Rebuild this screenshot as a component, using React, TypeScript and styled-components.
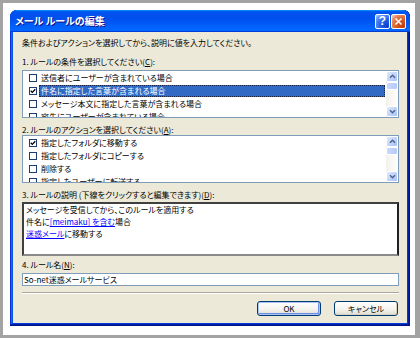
import React from "react";
import styled, { createGlobalStyle } from "styled-components";

const GlobalStyle = createGlobalStyle`
  html, body {
    margin: 0;
    padding: 0;
    background: #ffffff;
  }
  body {
    font-family: "Noto Sans CJK JP", "Noto Sans", sans-serif;
    font-feature-settings: "palt";
    color: #000000;
  }
`;

const Frame = styled.div`
  background: #ffffff;
  border: 3px solid #a3a3a3;
  border-right-width: 5px;
  box-sizing: border-box;
  height: 338px;
  padding: 7px 5px 9px 7px;
  width: 420px;
`;

const Window = styled.div`
  background: #0855dd;
  border-radius: 7px 7px 0 0;
  box-shadow: inset -1px -1px #00138c, inset 1px 1px #0831d9,
    inset -2px -2px #001ea0, inset 2px 2px #166aee, inset -3px -3px #003bda,
    inset 3px 3px #0855dd;
  box-sizing: border-box;
  display: flex;
  flex-direction: column;
  height: 316px;
  overflow: hidden;
  padding-bottom: 3px;
  width: 400px;
`;

const TitleBar = styled.div`
  align-items: center;
  background: linear-gradient(
    180deg,
    #0997ff,
    #0053ee 8%,
    #0050ee 40%,
    #0066ff 88%,
    #0066ff 93%,
    #005bff 95%,
    #003dd7 96%,
    #003dd7
  );
  border-radius: 7px 7px 0 0;
  display: flex;
  flex-shrink: 0;
  gap: 1px;
  height: 22px;
  padding: 0 4px 0 5px;
`;

const TitleText = styled.div`
  color: #ffffff;
  flex: 1;
  font-size: 10px;
  font-weight: 700;
  line-height: 12px;
  text-shadow: 1px 1px #0f1089;
`;

const CaptionButton = styled.div<{ $close?: boolean }>`
  align-items: center;
  background: ${({ $close }) =>
    $close
      ? "radial-gradient(circle at 85% 85%, #c23a0c 0%, #dc6527 50%, #e58a64 75%, #f8d2c0 100%)"
      : "radial-gradient(circle at 85% 85%, #0a3fcf 0%, #2d68e8 50%, #5a8ef5 75%, #b6cdfb 100%)"};
  border: 1px solid #ffffff;
  border-radius: 2px;
  box-sizing: border-box;
  color: #ffffff;
  display: flex;
  font-family: "Liberation Sans", sans-serif;
  font-size: 12px;
  font-weight: 700;
  height: 15px;
  justify-content: center;
  width: 15px;
`;

const Client = styled.div`
  background: #ece9d8;
  display: flex;
  flex: 1;
  flex-direction: column;
  font-size: 8px;
  margin: 0 3px;
  padding: 6px 8px 0 9px;
`;

const TextLine = styled.div<{ $mt?: number }>`
  height: 10px;
  line-height: 10px;
  margin-top: ${({ $mt }) => $mt ?? 0}px;
  white-space: nowrap;
`;

const ListBox = styled.div<{ $mt?: number }>`
  background: #ffffff;
  border: 1px solid #7f9db9;
  display: flex;
  flex-shrink: 0;
  height: 46px;
  margin-top: ${({ $mt }) => $mt ?? 0}px;
  overflow: hidden;
`;

const Rows = styled.div`
  display: flex;
  flex: 1;
  flex-direction: column;
  overflow: hidden;
  padding-right: 1px;
`;

const Row = styled.div`
  align-items: center;
  display: flex;
  flex-shrink: 0;
  height: 13px;
  padding-left: 6px;
`;

const CheckBox = styled.div`
  align-items: center;
  background: #ffffff;
  border: 1px solid #1c3d6e;
  box-sizing: border-box;
  display: flex;
  flex-shrink: 0;
  height: 8px;
  justify-content: center;
  width: 8px;
`;

const RowLabel = styled.div<{ $selected?: boolean }>`
  background: ${({ $selected }) => ($selected ? "#316ac5" : "transparent")};
  box-sizing: border-box;
  color: ${({ $selected }) => ($selected ? "#ffffff" : "#000000")};
  flex: 1;
  height: 12px;
  line-height: 11px;
  margin-left: 2px;
  outline: ${({ $selected }) =>
    $selected ? "1px dotted rgba(20, 20, 40, 0.8)" : "none"};
  outline-offset: -1px;
  padding: 0 2px;
  white-space: nowrap;
`;

const ScrollBar = styled.div`
  background: linear-gradient(90deg, #f3f1ec, #fefefb);
  display: flex;
  flex-direction: column;
  flex-shrink: 0;
  width: 12px;
`;

const ScrollArrow = styled.div`
  align-items: center;
  background: linear-gradient(135deg, #e0e9fe, #bcd0fb 60%, #a8c1f6);
  border: 1px solid #ffffff;
  border-radius: 2px;
  box-sizing: border-box;
  display: flex;
  height: 11px;
  justify-content: center;
`;

const ScrollThumb = styled.div`
  background: linear-gradient(90deg, #c8d8fc, #b7cbf9);
  border: 1px solid #ffffff;
  border-radius: 2px;
  box-sizing: border-box;
  height: 8px;
`;

const ScrollTrack = styled.div`
  flex: 1;
`;

const Description = styled.div`
  background: #ffffff;
  border-color: #404040 #202020 #8a8a8a #404040;
  border-style: solid;
  border-width: 2px;
  box-sizing: border-box;
  height: 54px;
  line-height: 12px;
  margin-top: 2px;
  padding: 0 2px;
`;

const Link = styled.span`
  color: #0000ff;
  text-decoration: underline;
`;

const NameInput = styled.div`
  background: #ffffff;
  border: 1px solid #7f9db9;
  box-sizing: border-box;
  height: 13px;
  line-height: 11px;
  margin-top: 3px;
  padding: 0 1px;
`;

const Separator = styled.div`
  border-bottom: 1px solid #ffffff;
  border-top: 1px solid #aca899;
  margin-top: 6px;
`;

const ButtonRow = styled.div`
  display: flex;
  gap: 13px;
  justify-content: flex-end;
  margin-top: 7px;
  padding-right: 1px;
`;

const Button = styled.div<{ $default?: boolean }>`
  align-items: center;
  background: linear-gradient(180deg, #ffffff, #f3f2ec 60%, #e3e0d4 90%, #d6d0c5);
  border: 1px solid #003c74;
  border-radius: 3px;
  box-shadow: ${({ $default }) =>
    $default
      ? "inset 0 0 0 1px #a9c4f5, inset -1px -1px 0 1px #6d8ee8"
      : "inset -1px -1px 0 #d8d2bd"};
  box-sizing: border-box;
  display: flex;
  height: 15px;
  justify-content: center;
  width: 64px;
`;

const Key = styled.span`
  text-decoration: underline;
`;

function Check() {
  return (
    <svg width="6" height="6" viewBox="0 0 6 6">
      <path d="M0.7 2.8 L2.3 4.4 L5.3 1.2" fill="none" stroke="#000" strokeWidth="1.3" />
    </svg>
  );
}

function Chevron({ down }: { down?: boolean }) {
  return (
    <svg width="7" height="5" viewBox="0 0 7 5">
      <path
        d={down ? "M1 1.2 L3.5 3.7 L6 1.2" : "M1 3.8 L3.5 1.3 L6 3.8"}
        fill="none"
        stroke="#4d6185"
        strokeWidth="1.4"
      />
    </svg>
  );
}

type Item = { text: string; checked?: boolean; selected?: boolean };

function RuleList({ items, mt }: { items: Item[]; mt: number }) {
  return (
    <ListBox $mt={mt}>
      <Rows>
        {items.map((item) => (
          <Row key={item.text}>
            <CheckBox>{item.checked && <Check />}</CheckBox>
            <RowLabel $selected={item.selected}>{item.text}</RowLabel>
          </Row>
        ))}
      </Rows>
      <ScrollBar>
        <ScrollArrow>
          <Chevron />
        </ScrollArrow>
        <ScrollThumb />
        <ScrollTrack />
        <ScrollArrow>
          <Chevron down />
        </ScrollArrow>
      </ScrollBar>
    </ListBox>
  );
}

const conditions: Item[] = [
  { text: "送信者にユーザーが含まれている場合" },
  { text: "件名に指定した言葉が含まれる場合", checked: true, selected: true },
  { text: "メッセージ本文に指定した言葉が含まれる場合" },
  { text: "宛先にユーザーが含まれている場合" },
];

const actions: Item[] = [
  { text: "指定したフォルダに移動する", checked: true },
  { text: "指定したフォルダにコピーする" },
  { text: "削除する" },
  { text: "指定したユーザーに転送する" },
];

export default function App() {
  return (
    <Frame>
      <GlobalStyle />
      <Window>
        <TitleBar>
          <TitleText>メール ルールの編集</TitleText>
          <CaptionButton>?</CaptionButton>
          <CaptionButton $close>
            <svg width="9" height="9" viewBox="0 0 9 9">
              <path d="M1.5 1.5 L7.5 7.5 M7.5 1.5 L1.5 7.5" stroke="#fff" strokeWidth="1.6" />
            </svg>
          </CaptionButton>
        </TitleBar>
        <Client>
          <TextLine>条件およびアクションを選択してから、説明に値を入力してください。</TextLine>
          <TextLine $mt={9}>
            1. ルールの条件を選択してください(<Key>C</Key>):
          </TextLine>
          <RuleList items={conditions} mt={3} />
          <TextLine $mt={7}>
            2. ルールのアクションを選択してください(<Key>A</Key>):
          </TextLine>
          <RuleList items={actions} mt={0} />
          <TextLine $mt={7}>
            3. ルールの説明 (下線をクリックすると編集できます)(<Key>D</Key>):
          </TextLine>
          <Description>
            <div>メッセージを受信してから、このルールを適用する</div>
            <div>
              件名に<Link>[meimaku] を含む</Link>場合
            </div>
            <div>
              <Link>迷惑メール</Link>に移動する
            </div>
          </Description>
          <TextLine $mt={4}>
            4. ルール名(<Key>N</Key>):
          </TextLine>
          <NameInput>So-net迷惑メールサービス</NameInput>
          <Separator />
          <ButtonRow>
            <Button $default>OK</Button>
            <Button>キャンセル</Button>
          </ButtonRow>
        </Client>
      </Window>
    </Frame>
  );
}
